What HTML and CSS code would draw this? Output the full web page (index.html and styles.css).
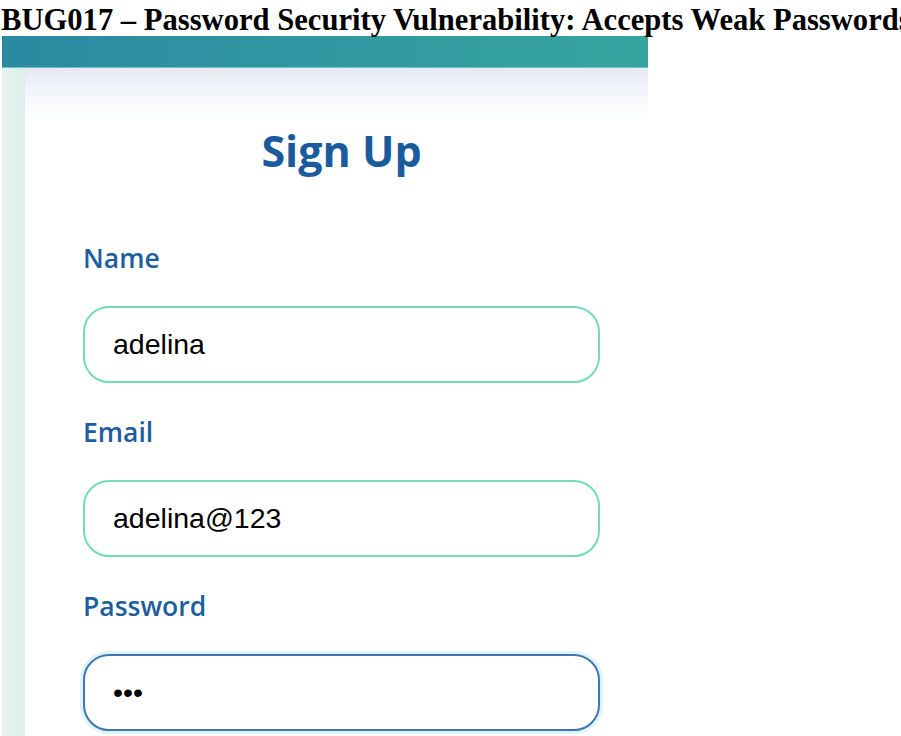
FILE: index.html
```html
<!DOCTYPE html>
<html lang="en">
<head>
<meta charset="utf-8">
<title>BUG017</title>
<link rel="stylesheet" href="styles.css">
</head>
<body>
<h1 class="title">BUG017 – Password Security Vulnerability: Accepts Weak Passwords</h1>
<div class="frame">
  <div class="banner"></div>
  <div class="card">
    <div class="strip"></div>
    <div class="content">
      <form class="form">
        <h2 class="heading">Sign Up</h2>
        <div class="field">
          <label class="label">Name</label>
          <input class="input" type="text" value="adelina">
        </div>
        <div class="field">
          <label class="label">Email</label>
          <input class="input" type="text" value="adelina@123">
        </div>
        <div class="field">
          <label class="label">Password</label>
          <input class="input input-focus" type="password" value="abc">
        </div>
      </form>
    </div>
  </div>
</div>
</body>
</html>
```
FILE: styles.css
```css
html, body {
  margin: 0;
  padding: 0;
  background: #ffffff;
  overflow: hidden;
}
body {
  width: 901px;
  height: 736px;
}
.title {
  margin: 0;
  font-family: "Liberation Serif", serif;
  font-weight: 700;
  font-size: 30.6px;
  line-height: 40px;
  height: 36px;
  color: #000;
  white-space: nowrap;
  padding-left: 1px;
}
.frame {
  width: 646px;
  margin-left: 2px;
}
.banner {
  height: 31px;
  background: linear-gradient(90deg, #2b88a1 0%, #3198a2 50%, #35a59f 100%);
  border-bottom: 1px solid #6fc1c3;
}
.card {
  display: flex;
  height: 700px;
  background: linear-gradient(180deg, #e5eaf3 0px, #f6f8fb 30px, #ffffff 55px);
}
.strip {
  width: 23px;
  flex: none;
  background: linear-gradient(90deg, #e5f3ee 0%, #dcefea 100%);
}
.content {
  flex: 1;
  padding-left: 58px;
}
.form {
  width: 517px;
  display: flex;
  flex-direction: column;
}
.heading {
  margin: 58px 0 0;
  font-family: "Open Sans", sans-serif;
  font-weight: 700;
  font-size: 43px;
  line-height: 50px;
  color: #1a5b9d;
  text-align: center;
}
.field {
  display: flex;
  flex-direction: column;
  margin-top: 33px;
}
.field:first-of-type {
  margin-top: 66px;
}
.label {
  font-family: "Open Sans", sans-serif;
  font-weight: 600;
  font-size: 26.5px;
  line-height: 32px;
  color: #1e5e9e;
}
.input {
  box-sizing: border-box;
  margin-top: 32px;
  width: 517px;
  height: 77px;
  border: 2px solid #72dbb8;
  border-radius: 26px;
  padding: 0 0 0 28px;
  font-family: "Liberation Sans", Arial, sans-serif;
  font-size: 28.5px;
  color: #000;
  background: #fff;
  outline: none;
}
.input-focus {
  border-color: #4274b2;
  box-shadow: 0 0 0 3px #dcf4fc;
}
```
